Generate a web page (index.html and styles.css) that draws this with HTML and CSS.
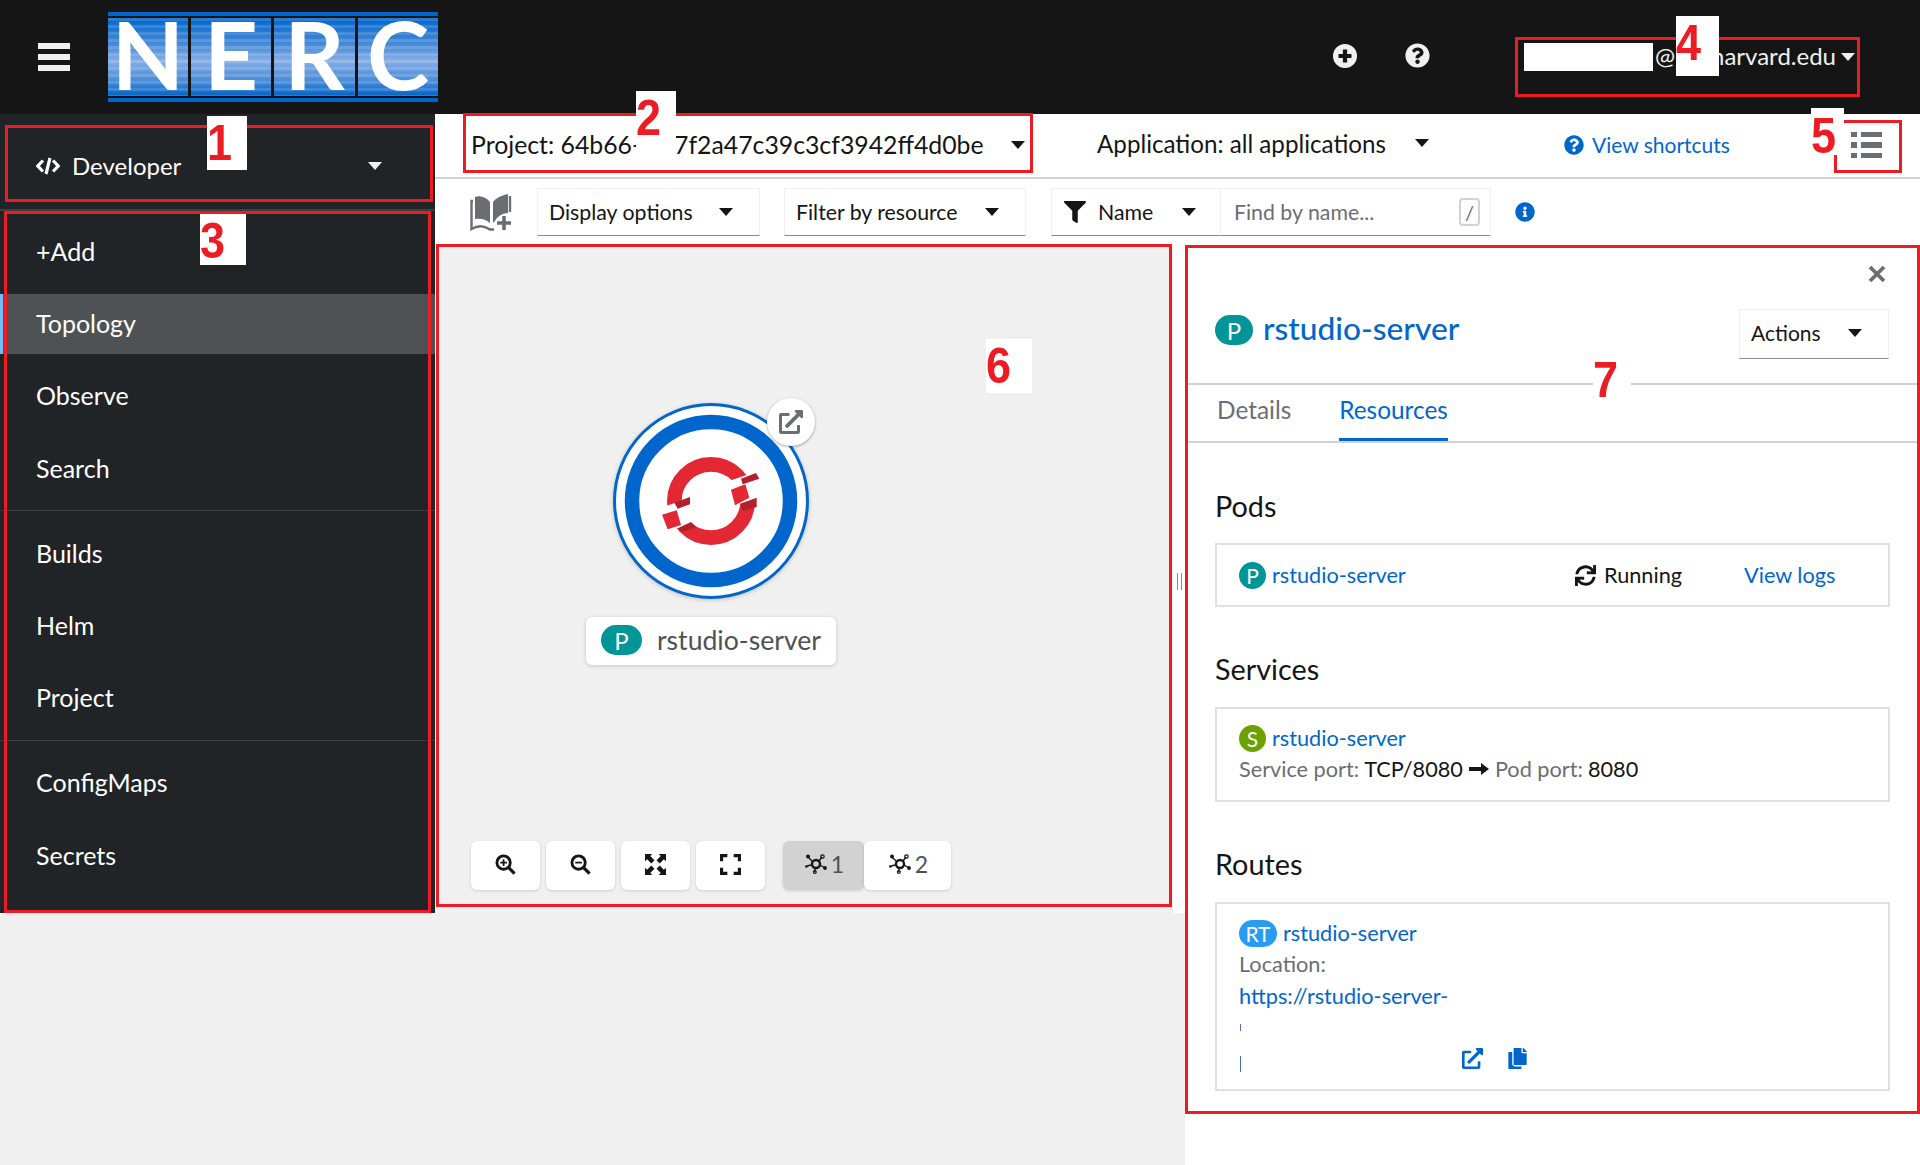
FILE: index.html
```html
<!DOCTYPE html>
<html lang="en">
<head>
<meta charset="utf-8">
<title>NERC Developer Topology</title>
<link rel="stylesheet" href="styles.css">
</head>
<body>
<header class="masthead">
  <div class="burger"><span></span><span></span><span></span></div>
  <div class="logo">
    <div class="logo-tiles">
      <div class="tile">N</div><div class="tile">E</div><div class="tile">R</div><div class="tile">C</div>
    </div>
  </div>
  <svg class="mast-icon plus" viewBox="0 0 24 24"><circle cx="12" cy="12" r="12" fill="#f0f0f0"/><path d="M12 5.500v13M5.500 12h13" stroke="#151515" stroke-width="4.200"/></svg>
  <svg class="mast-icon help" viewBox="0 0 512 512"><path fill="#f0f0f0" d="M504 256c0 136.997-111.043 248-248 248S8 392.997 8 256C8 119.083 119.043 8 256 8s248 111.083 248 248zM262.655 90c-54.497 0-89.255 22.957-116.549 63.758-3.536 5.286-2.353 12.415 2.715 16.258l34.699 26.31c5.205 3.947 12.621 3.008 16.665-2.122 17.864-22.658 30.113-35.797 57.303-35.797 20.429 0 45.698 13.148 45.698 32.958 0 14.976-12.363 22.667-32.534 33.976C247.128 238.528 216 254.941 216 296v4c0 6.627 5.373 12 12 12h56c6.627 0 12-5.373 12-12v-1.333c0-28.462 83.186-29.647 83.186-106.667 0-58.002-60.165-102-116.531-102zM256 338c-25.365 0-46 20.635-46 46 0 25.364 20.635 46 46 46s46-20.636 46-46c0-25.365-20.635-46-46-46z"/></svg>
  <div class="user">
    <span class="redact"></span>
    <span class="user-at">@</span>
    <span class="user-domain"><span>harvard.edu</span></span>
    <span class="caret caret-light"></span>
  </div>
</header>

<div class="shell">
  <aside class="sidebar">
    <div class="perspective">
      <svg class="code-icon" viewBox="0 0 24 18"><path d="M7 3.500 1.800 9 7 14.500M17 3.500 22.200 9 17 14.500M14 1 10 17" fill="none" stroke="#fff" stroke-width="3.200"/></svg>
      <span class="perspective-name">Developer</span>
      <span class="caret caret-light"></span>
    </div>
    <nav class="nav">
      <a class="nav-item">+Add</a>
      <a class="nav-item nav-active">Topology</a>
      <a class="nav-item">Observe</a>
      <a class="nav-item">Search</a>
      <div class="nav-sep"></div>
      <a class="nav-item">Builds</a>
      <a class="nav-item">Helm</a>
      <a class="nav-item">Project</a>
      <div class="nav-sep"></div>
      <a class="nav-item">ConfigMaps</a>
      <a class="nav-item">Secrets</a>
    </nav>
  </aside>

  <main class="content">
    <div class="topbar">
      <div class="project">
        <span class="project-a">Project: 64b66-</span>
        <span class="project-b">7f2a47c39c3cf3942ff4d0be</span>
        <span class="caret"></span>
      </div>
      <div class="application">
        <span>Application: all applications</span>
        <span class="caret"></span>
      </div>
      <a class="shortcuts">
        <svg class="icon-20" viewBox="0 0 512 512"><path fill="#06c" d="M504 256c0 136.997-111.043 248-248 248S8 392.997 8 256C8 119.083 119.043 8 256 8s248 111.083 248 248zM262.655 90c-54.497 0-89.255 22.957-116.549 63.758-3.536 5.286-2.353 12.415 2.715 16.258l34.699 26.31c5.205 3.947 12.621 3.008 16.665-2.122 17.864-22.658 30.113-35.797 57.303-35.797 20.429 0 45.698 13.148 45.698 32.958 0 14.976-12.363 22.667-32.534 33.976C247.128 238.528 216 254.941 216 296v4c0 6.627 5.373 12 12 12h56c6.627 0 12-5.373 12-12v-1.333c0-28.462 83.186-29.647 83.186-106.667 0-58.002-60.165-102-116.531-102zM256 338c-25.365 0-46 20.635-46 46 0 25.364 20.635 46 46 46s46-20.636 46-46c0-25.365-20.635-46-46-46z"/></svg>
        <span>View shortcuts</span>
      </a>
      <svg class="list-icon" viewBox="0 0 31 26"><g fill="#6a6e73"><rect y="0" width="6" height="5"/><rect y="10" width="6" height="6"/><rect y="21" width="6" height="5"/><rect x="10" y="0" width="21" height="5"/><rect x="10" y="10" width="21" height="6"/><rect x="10" y="21" width="21" height="5"/></g></svg>
    </div>

    <div class="toolbar">
      <svg class="book-icon" viewBox="0 0 42 37"><path fill="#6a6e73" d="M5 3C10 1 16 3 20 8V29C16 25 10 24 5 25Z M23 8C27 3 33 1 38 0V19C32 19 27 23 25 27L23 29Z"/><path fill="none" stroke="#6a6e73" stroke-width="2.400" d="M3 7H1.500V35C8 31 15 32 20 35.500H24M40 2V18"/><path fill="none" stroke="#6a6e73" stroke-width="3.600" d="M34 22v14M27 29h14"/></svg>
      <div class="select select-display"><span>Display options</span><span class="caret"></span></div>
      <div class="select select-filter"><span>Filter by resource</span><span class="caret"></span></div>
      <div class="search-group">
        <div class="name-filter">
          <svg class="funnel" viewBox="0 0 512 512"><path fill="#151515" d="M487.976 0H24.028C2.71 0-8.047 25.866 7.058 40.971L192 225.941V432c0 7.831 3.821 15.17 10.237 19.662l80 55.98C298.02 518.69 320 507.493 320 487.98V225.941l184.947-184.97C520.021 25.896 509.338 0 487.976 0z"/></svg>
          <span class="name-label">Name</span>
          <span class="caret"></span>
        </div>
        <div class="find">
          <span>Find by name...</span>
          <span class="slash">/</span>
        </div>
      </div>
      <svg class="info-icon" viewBox="0 0 512 512"><path fill="#06c" d="M256 8C119.043 8 8 119.083 8 256c0 136.997 111.043 248 248 248s248-111.003 248-248C504 119.083 392.957 8 256 8zm0 110c23.196 0 42 18.804 42 42s-18.804 42-42 42-42-18.804-42-42 18.804-42 42-42zm56 254c0 6.627-5.373 12-12 12h-88c-6.627 0-12-5.373-12-12v-24c0-6.627 5.373-12 12-12h12v-64h-12c-6.627 0-12-5.373-12-12v-24c0-6.627 5.373-12 12-12h64c6.627 0 12 5.373 12 12v100h12c6.627 0 12 5.373 12 12v24z"/></svg>
    </div>

    <div class="workspace">
      <div class="stage">
        <section class="canvas">
          <div class="node">
            <svg class="node-disc" viewBox="-98 -98 196 196">
              <circle r="96.500" fill="#fff" stroke="#06c" stroke-width="3"/>
              <circle r="79" fill="#fff" stroke="#06c" stroke-width="14.500"/>
              <g transform="scale(.3333)">
                <circle r="110" fill="none" stroke="#e32733" stroke-width="44"/>
                <polygon fill="#fff" points="60,-62 150,-92 150,-12 88,8 60,20"/>
                <polygon fill="#fff" points="-150,20 -63,-10 -55,63 -103,90 -150,100"/>
                <polygon fill="#e32733" points="60,-34 103,-50 115,-10 72,13"/>
                <polygon fill="#e32733" points="-147,41 -103,28 -90,72 -130,85"/>
                <polygon fill="#b2202b" points="90,-67 135,-84 145,-67 95,-50"/>
                <polygon fill="#b2202b" points="88,8 137,-10 137,18 95,30"/>
                <polygon fill="#b2202b" points="-110,5 -63,-12 -63,10 -100,23"/>
                <polygon fill="#b2202b" points="-103,83 -60,63 -45,78 -85,93"/>
              </g>
            </svg>
            <span class="node-link">
              <svg class="node-link-icon" viewBox="0 0 512 512"><path fill="#6a6e73" d="M432,320H400a16,16,0,0,0-16,16V448H64V128H208a16,16,0,0,0,16-16V80a16,16,0,0,0-16-16H48A48,48,0,0,0,0,112V464a48,48,0,0,0,48,48H400a48,48,0,0,0,48-48V336A16,16,0,0,0,432,320ZM488,0h-128c-21.37,0-32.05,25.91-17,41l35.73,35.73L135,320.37a24,24,0,0,0,0,34L157.67,377a24,24,0,0,0,34,0L435.28,133.32,471,169c15,15,41,4.5,41-17V24A24,24,0,0,0,488,0Z"/></svg>
            </span>
            <div class="node-label"><span class="node-badge">P</span><span>rstudio-server</span></div>
          </div>
          <div class="controls">
            <button class="ctl"><svg class="ctl-icon" viewBox="0 0 22 22"><circle cx="9" cy="9" r="7" fill="none" stroke="#151515" stroke-width="3"/><path d="M14 14l6.500 6.500" stroke="#151515" stroke-width="3.400"/><path d="M9 5.500v7M5.500 9h7" stroke="#151515" stroke-width="1.800"/></svg></button>
            <button class="ctl"><svg class="ctl-icon" viewBox="0 0 22 22"><circle cx="9" cy="9" r="7" fill="none" stroke="#151515" stroke-width="3"/><path d="M14 14l6.500 6.500" stroke="#151515" stroke-width="3.400"/><path d="M5.500 9h7" stroke="#151515" stroke-width="1.800"/></svg></button>
            <button class="ctl"><svg class="ctl-icon" viewBox="0 0 20 20"><path fill="#151515" d="M0 0h7L5 2l4 4-3 3-4-4-2 2zM20 0v7l-2-2-4 4-3-3 4-4-2-2zM0 20v-7l2 2 4-4 3 3-4 4 2 2zM20 20h-7l2-2-4-4 3-3 4 4 2-2z"/></svg></button>
            <button class="ctl"><svg class="ctl-icon" viewBox="0 0 20 20"><path fill="none" stroke="#151515" stroke-width="3" d="M1.500 7V1.500H7M13 1.500h5.500V7M1.500 13v5.500H7M13 18.500h5.500V13"/></svg></button>
            <div class="ctl-group">
              <button class="ctl-toggle ctl-on"><svg class="topo-icon" viewBox="0 0 22 20"><g fill="none" stroke="#151515"><path stroke-width="1.400" d="M3 3l4 4M17 3l-3 4M2 12l4-1M20 14l-5-3M10 18l0-4"/><circle cx="11" cy="10" r="4" stroke-width="2.400"/><circle cx="17.500" cy="2.500" r="1.700" stroke-width="1.200"/><circle cx="9.800" cy="18" r="1.400" stroke-width="1.200"/></g><g fill="#151515"><circle cx="3" cy="2.500" r="2"/><circle cx="1.300" cy="12.500" r="1.300"/><circle cx="20" cy="14" r="1.900"/></g></svg><span>1</span></button>
              <button class="ctl-toggle"><svg class="topo-icon" viewBox="0 0 22 20"><g fill="none" stroke="#151515"><path stroke-width="1.400" d="M3 3l4 4M17 3l-3 4M2 12l4-1M20 14l-5-3M10 18l0-4"/><circle cx="11" cy="10" r="4" stroke-width="2.400"/><circle cx="17.500" cy="2.500" r="1.700" stroke-width="1.200"/><circle cx="9.800" cy="18" r="1.400" stroke-width="1.200"/></g><g fill="#151515"><circle cx="3" cy="2.500" r="2"/><circle cx="1.300" cy="12.500" r="1.300"/><circle cx="20" cy="14" r="1.900"/></g></svg><span>2</span></button>
            </div>
          </div>
        </section>
        <div class="resizer"><span></span><span></span></div>
      </div>

      <aside class="panel">
        <div class="panel-close"><svg class="close-icon" viewBox="0 0 18 18"><path d="M2 2l14 14M16 2 2 16" stroke="#6a6e73" stroke-width="3.800"/></svg></div>
        <div class="panel-head">
          <span class="badge badge-title">P</span>
          <span class="panel-title">rstudio-server</span>
          <div class="select select-actions"><span>Actions</span><span class="caret"></span></div>
        </div>
        <div class="tabs">
          <span class="tab">Details</span>
          <span class="tab tab-active">Resources</span>
        </div>
        <div class="panel-body">
          <h2 class="section-title title-pods">Pods</h2>
          <div class="card card-pods">
            <div class="pod-row">
              <span class="res-name"><span class="badge badge-pod">P</span><a class="link">rstudio-server</a></span>
              <span class="pod-status"><svg class="sync-icon" viewBox="0 0 512 512"><path fill="#151515" d="M440.65 12.57l4 82.77A247.16 247.16 0 0 0 255.83 8C134.730 8 33.910 94.920 12.290 209.820A12 12 0 0 0 24.090 224h49.050a12 12 0 0 0 11.670-9.260 175.910 175.910 0 0 1 317-56.940l-101.460-4.860a12 12 0 0 0-12.570 12v47.410a12 12 0 0 0 12 12H500a12 12 0 0 0 12-12V12a12 12 0 0 0-12-12h-47.370a12 12 0 0 0-11.980 12.570zM255.830 432a175.610 175.610 0 0 1-146-77.800l101.800 4.870a12 12 0 0 0 12.570-12v-47.400a12 12 0 0 0-12-12H12a12 12 0 0 0-12 12V500a12 12 0 0 0 12 12h47.350a12 12 0 0 0 12-12.600l-4.150-82.570A247.170 247.170 0 0 0 255.830 504c121.110 0 221.930-86.920 243.550-201.820a12 12 0 0 0-11.800-14.180h-49.050a12 12 0 0 0-11.670 9.260A175.860 175.860 0 0 1 255.830 432z"/></svg><span>Running</span></span>
              <a class="link">View logs</a>
            </div>
          </div>
          <h2 class="section-title title-services">Services</h2>
          <div class="card card-services">
            <div class="res-name"><span class="badge badge-svc">S</span><a class="link">rstudio-server</a></div>
            <div class="line">
              <span class="muted">Service port:</span>
              <span>TCP/8080</span>
              <svg class="arrow" viewBox="0 0 20 12"><path fill="#151515" d="M0 4h12V0l8 6-8 6V8H0z"/></svg>
              <span class="muted">Pod port:</span>
              <span>8080</span>
            </div>
          </div>
          <h2 class="section-title title-routes">Routes</h2>
          <div class="card card-routes">
            <div class="res-name"><span class="badge badge-route">RT</span><a class="link">rstudio-server</a></div>
            <div class="line muted">Location:</div>
            <div class="line"><a class="link">https://rstudio-server-</a></div>
            <div class="url-rest">
              <i class="tick tick-a"></i>
              <div class="url-last">
                <i class="tick tick-b"></i>
                <svg class="route-icon" viewBox="0 0 512 512"><path fill="#06c" d="M432,320H400a16,16,0,0,0-16,16V448H64V128H208a16,16,0,0,0,16-16V80a16,16,0,0,0-16-16H48A48,48,0,0,0,0,112V464a48,48,0,0,0,48,48H400a48,48,0,0,0,48-48V336A16,16,0,0,0,432,320ZM488,0h-128c-21.37,0-32.05,25.91-17,41l35.730,35.730L135,320.370a24,24,0,0,0,0,34L157.670,377a24,24,0,0,0,34,0L435.280,133.320,471,169c15,15,41,4.500,41-17V24A24,24,0,0,0,488,0Z"/></svg>
                <svg class="copy-icon" viewBox="0 0 448 512"><path fill="#06c" d="M320 448v40c0 13.255-10.745 24-24 24H24c-13.255 0-24-10.745-24-24V120c0-13.255 10.745-24 24-24h72v296c0 30.879 25.121 56 56 56h168zm0-344V0H152c-13.255 0-24 10.745-24 24v368c0 13.255 10.745 24 24 24h272c13.255 0 24-10.745 24-24V128H344c-13.200 0-24-10.800-24-24zm120.971-31.029L375.029 7.029A24 24 0 0 0 358.059 0H352v96h96v-6.059a24 24 0 0 0-7.029-16.970z"/></svg>
              </div>
            </div>
          </div>
        </div>
      </aside>
    </div>
  </main>
</div>

<div class="anno-box box-1"></div>
<div class="anno-box box-2"></div>
<div class="anno-box box-3"></div>
<div class="anno-box box-4"></div>
<div class="anno-box box-5"></div>
<div class="anno-box box-6"></div>
<div class="anno-box box-7"></div>
<div class="anno-label label-1"><span class="digit">1</span></div>
<div class="anno-label label-2"><span class="digit">2</span></div>
<div class="anno-label label-3"><span class="digit">3</span></div>
<div class="anno-label label-4"><span class="digit">4</span></div>
<div class="anno-label label-5"><span class="digit">5</span></div>
<div class="anno-label label-6"><span class="digit">6</span></div>
<div class="anno-label label-7"><span class="digit">7</span></div>
</body>
</html>
```
FILE: styles.css
```css
* { box-sizing: border-box; }
html, body { margin: 0; padding: 0; }
body {
  position: relative;
  width: 1920px;
  height: 1165px;
  overflow: hidden;
  background: #f0f0f0;
  color: #151515;
  font-family: "Lato", "Liberation Sans", sans-serif;
  font-size: 23px;
}
button { font: inherit; border: 0; padding: 0; }
svg { display: block; flex: none; }

/* caret */
.caret {
  display: block;
  flex: none;
  width: 0;
  height: 0;
  border-left: 7.5px solid transparent;
  border-right: 7.5px solid transparent;
  border-top: 8px solid #151515;
}
.caret-light { border-top-color: #f0f0f0; }

/* masthead */
.masthead {
  display: flex;
  align-items: center;
  height: 114px;
  background: #151515;
  padding-left: 38px;
}
.burger { display: flex; flex-direction: column; gap: 5px; width: 32px; margin-right: 38px; }
.burger span { display: block; height: 6px; background: #f0f0f0; }
.logo {
  width: 330px;
  height: 90px;
  padding: 6px 0;
  background: linear-gradient(#06c 0 4px, #151515 4px 86px, #06c 86px);
}
.logo-tiles {
  display: grid;
  grid-template-columns: 80px 80px 81px 80px;
  column-gap: 3px;
  height: 78px;
}
.tile {
  display: flex;
  align-items: center;
  justify-content: center;
  padding-bottom: 6px;
  color: #fff;
  font-family: "Lato", sans-serif;
  font-weight: 700;
  font-size: 94px;
  line-height: 72px;
  background:
    repeating-linear-gradient(180deg, rgba(255,255,255,.14) 0 3px, rgba(255,255,255,0) 3px 7px),
    linear-gradient(180deg, #06c 0%, #4a8cd8 35%, #85aee6 55%, #4a8cd8 80%, #06c 100%);
}
.mast-icon { width: 24px; height: 24px; margin-bottom: 3px; }
.plus { margin-left: 895px; }
.help { margin-left: 48px; width: 25px; height: 25px; }
.user {
  display: flex;
  align-items: center;
  margin-left: 94px;
  color: #f0f0f0;
  font-size: 24px;
}
.redact { display: block; width: 129px; height: 28px; background: #fff; margin-right: 2px; }
.user-at { display: block; width: 64px; margin-bottom: 3px; }
.user-domain { display: flex; justify-content: flex-end; width: 117px; overflow: hidden; white-space: nowrap; margin-bottom: 3px; }
.user-domain span { flex: none; }
.user .caret { margin-left: 5px; }

/* shell */
.shell { display: flex; align-items: flex-start; }
.sidebar { width: 435px; height: 799px; background: #212427; color: #fff; flex: none; }
.perspective {
  display: flex;
  align-items: center;
  height: 97px;
  padding: 8px 53px 0 36px;
  border-bottom: 2px solid #3c3f42;
  font-size: 24px;
}
.code-icon { width: 24px; height: 18px; margin-right: 12px; }
.perspective-name { flex: 1; }
.nav { display: flex; flex-direction: column; padding-top: 10.5px; }
.nav-item {
  display: flex;
  align-items: center;
  height: 60px;
  margin-bottom: 12.2px;
  padding-left: 36px;
  padding-bottom: 1px;
  font-size: 25px;
}
.nav-active { background: #4f5255; border-left: 3px solid #73bcf7; padding-left: 33px; }
.nav-sep { height: 1px; background: #3c3f42; margin: 0 0 12px 0; }

/* content */
.content { flex: 1; min-width: 0; }
.topbar {
  display: flex;
  align-items: center;
  height: 65px;
  background: #fff;
  border-bottom: 2px solid #d2d2d2;
}
.project { display: flex; align-items: center; width: 590px; margin-left: 36px; white-space: nowrap; font-size: 24.8px; padding-bottom: 2px; }
.project-a { width: 165px; overflow: hidden; }
.project-b { width: 337px; margin-left: 38px; }
.application { display: flex; align-items: center; white-space: nowrap; font-size: 24.2px; padding-bottom: 5px; }
.application .caret { margin-left: 29px; }
.application { width: 467px; margin-left: 36px; }
.shortcuts { display: flex; align-items: center; gap: 8px; color: #06c; font-size: 21px; white-space: nowrap; width: 287px; padding-bottom: 2px; }
.icon-20 { width: 20px; height: 20px; }
.list-icon { width: 31px; height: 26px; margin-top: -2px; }

.toolbar {
  display: flex;
  align-items: center;
  height: 66px;
  background: #fff;
  padding-left: 35px;
}
.book-icon { width: 42px; height: 37px; margin-right: 25px; }
.select {
  display: flex;
  align-items: center;
  justify-content: space-between;
  height: 48px;
  border: 1px solid #f0f0f0;
  border-bottom: 1px solid #8a8d90;
  background: #fff;
  font-size: 21.3px;
  white-space: nowrap;
}
.select-display { width: 223px; padding: 0 26px 1px 11px; margin-right: 24px; }
.select-filter { width: 242px; padding: 0 26px 1px 11px; margin-right: 25px; }
.search-group { display: flex; height: 48px; }
.name-filter {
  display: flex;
  align-items: center;
  width: 170px;
  padding: 0 0 1px 12px;
  border: 1px solid #f0f0f0;
  border-bottom: 1px solid #8a8d90;
  font-size: 21.3px;
}
.funnel { width: 22px; height: 22px; margin-right: 12px; }
.name-label { width: 84px; }
.find {
  display: flex;
  align-items: center;
  justify-content: space-between;
  width: 270px;
  padding: 0 10px 0 13px;
  border: 1px solid #f0f0f0;
  border-left: 0;
  border-bottom: 1px solid #8a8d90;
  color: #6a6e73;
  font-size: 21.3px;
}
.slash {
  display: flex;
  align-items: center;
  justify-content: center;
  width: 21px;
  height: 28px;
  border: 2px solid #d2d2d2;
  border-radius: 4px;
  font-size: 20px;
}
.info-icon { width: 20px; height: 20px; margin-left: 24px; }

/* workspace */
.workspace { display: flex; align-items: flex-start; }
.stage { display: flex; width: 750px; height: 668px; flex: none; background: #fff; }
.canvas { position: relative; width: 738px; height: 100%; background: #f0f0f0; }
.resizer { flex: 1; display: flex; justify-content: center; gap: 3px; padding-top: 328px; }
.resizer span { display: block; width: 1px; height: 17px; background: #8a8d90; }

.node { position: absolute; left: 0; top: 0; }
.node-disc { position: absolute; left: 178px; top: 158px; width: 196px; height: 196px; filter: drop-shadow(0 1px 2px rgba(0,0,0,.2)); }
.node-link {
  position: absolute;
  left: 332px;
  top: 153px;
  display: flex;
  align-items: center;
  justify-content: center;
  width: 48px;
  height: 48px;
  border-radius: 50%;
  background: #fff;
  box-shadow: 0 1px 3px rgba(0,0,0,.35);
}
.node-link-icon { width: 24px; height: 24px; }
.node-label {
  position: absolute;
  left: 151px;
  top: 372px;
  display: flex;
  align-items: center;
  gap: 15px;
  width: 250px;
  height: 48px;
  padding: 0 0 2px 15px;
  border-radius: 6px;
  background: #fff;
  box-shadow: 0 1px 4px rgba(0,0,0,.18);
  color: #4f5255;
  font-size: 26.6px;
  white-space: nowrap;
}
.node-badge {
  display: flex;
  align-items: center;
  justify-content: center;
  width: 41px;
  height: 30px;
  border-radius: 15px;
  background: #009596;
  color: #fff;
  font-size: 24px;
}
.controls { position: absolute; left: 36px; top: 596px; display: flex; gap: 6px; }
.ctl {
  display: flex;
  align-items: center;
  justify-content: center;
  width: 69px;
  height: 49px;
  padding-bottom: 3px;
  background: #fff;
  border-radius: 6px;
  box-shadow: 0 1px 3px rgba(0,0,0,.15);
}
.ctl-icon { width: 21px; height: 21px; }
.ctl-group { display: flex; margin-left: 12px; }
.ctl-toggle {
  display: flex;
  align-items: center;
  justify-content: center;
  gap: 4px;
  width: 87px;
  height: 49px;
  padding: 0 0 3px 2px;
  background: #fff;
  color: #4f5255;
  border-radius: 6px;
  box-shadow: 0 1px 3px rgba(0,0,0,.15);
  font-size: 23px;
}
.ctl-on { width: 81px; background: #d2d2d2; }
.topo-icon { width: 22px; height: 20px; }

/* panel */
.panel { width: 735px; height: 920px; background: #fff; flex: none; }
.panel-close { display: flex; justify-content: flex-end; height: 64px; padding: 20px 34px 0 0; }
.close-icon { width: 18px; height: 18px; }
.panel-head { display: flex; align-items: flex-start; height: 74px; padding: 0 31px 0 30px; }
.badge {
  display: flex;
  align-items: center;
  justify-content: center;
  flex: none;
  color: #fff;
}
.badge-title { width: 38px; height: 30px; border-radius: 15px; background: #009596; font-size: 24px; margin: 6px 10px 0 0; }
.panel-title { flex: 1; color: #06c; font-size: 31.7px; line-height: 38px; font-weight: 500; }
.select-actions { width: 150px; padding: 0 26px 3px 11px; height: 50px; font-size: 21px; }
.tabs {
  display: flex;
  height: 60px;
  border-top: 2px solid #d2d2d2;
  border-bottom: 2px solid #d2d2d2;
  padding-left: 32px;
  color: #6a6e73;
  font-size: 24.4px;
}
.tab { display: flex; align-items: center; height: 56px; padding-bottom: 8px; margin-right: 48px; }
.tab-active { color: #06c; border-bottom: 3px solid #06c; padding-bottom: 5px; }
.panel-body { padding: 0 30px; }
.section-title { margin: 0; font-size: 28.8px; font-weight: 400; line-height: 32px; color: #151515; }
.title-pods { padding-top: 47px; padding-bottom: 21px; }
.title-services { padding-top: 46px; padding-bottom: 22px; }
.title-routes { padding-top: 46px; padding-bottom: 22px; }
.card { border: 2px solid #e0e0e0; padding-left: 22px; font-size: 21.7px; }
.card-pods { height: 64px; display: flex; align-items: center; }
.card-services { height: 95px; padding-top: 15px; }
.card-routes { height: 189px; padding-top: 15px; }
.pod-row { display: flex; align-items: center; width: 100%; }
.res-name { display: flex; align-items: center; gap: 6px; height: 28px; }
.pod-row .res-name { width: 336px; }
.pod-status { display: flex; align-items: center; gap: 8px; width: 169px; }
.sync-icon { width: 21px; height: 21px; }
.link { color: #06c; white-space: nowrap; }
.badge-pod { width: 27px; height: 27px; border-radius: 50%; background: #009596; font-size: 21px; }
.badge-svc { width: 27px; height: 27px; border-radius: 50%; background: #6ca100; font-size: 21px; }
.badge-route { width: 38px; height: 27px; border-radius: 14px; background: #2b9af3; font-size: 21px; }
.line { display: flex; align-items: center; gap: 5px; height: 31px; margin-top: 1px; white-space: nowrap; }
.muted { color: #6a6e73; }
.arrow { width: 20px; height: 12px; margin: 0 1px; }
.tick { display: block; flex: none; width: 1px; margin-left: 1px; background: #7a5fb0; }
.tick-a { height: 7px; margin-top: 13px; }
.url-last { display: flex; align-items: flex-start; margin-top: 17px; }
.tick-b { height: 16px; margin-top: 8px; background: #3f6fc0; }
.route-icon { width: 21px; height: 21px; margin-left: 221px; margin-right: 25px; }
.copy-icon { width: 19px; height: 21px; }

/* annotations */
.anno-box { position: absolute; border: 3px solid #ed1c24; pointer-events: none; }
.box-1 { left: 5px; top: 125px; width: 428px; height: 77px; }
.box-2 { left: 463px; top: 113px; width: 570px; height: 60px; }
.box-3 { left: 4px; top: 211px; width: 427px; height: 702px; }
.box-4 { left: 1515px; top: 37px; width: 345px; height: 60px; }
.box-5 { left: 1834px; top: 120px; width: 68px; height: 53px; }
.box-6 { left: 436px; top: 244px; width: 736px; height: 663px; }
.box-7 { left: 1185px; top: 245px; width: 735px; height: 869px; }
.anno-label {
  position: absolute;
  display: flex;
  align-items: center;
  justify-content: flex-start;
  background: #fff;
  color: #ed1c24;
  font-family: "Liberation Sans", Arial, sans-serif;
  font-weight: 700;
  font-size: 50px;
  line-height: 1;
}
.digit { display: block; transform: scaleX(.9); transform-origin: left center; }
.label-1 { left: 207px; top: 116px; width: 40px; height: 54px; }
.label-2 { left: 636px; top: 91px; width: 40px; height: 54px; }
.label-3 { left: 200px; top: 214px; width: 46px; height: 51px; padding-top: 3px; }
.label-4 { left: 1676px; top: 16px; width: 43px; height: 60px; padding-bottom: 6px; }
.label-5 { left: 1811px; top: 108px; width: 33px; height: 47px; padding-top: 8px; }
.label-6 { left: 986px; top: 339px; width: 46px; height: 54px; }
.label-7 { left: 1593px; top: 360px; width: 38px; height: 40px; }
```
